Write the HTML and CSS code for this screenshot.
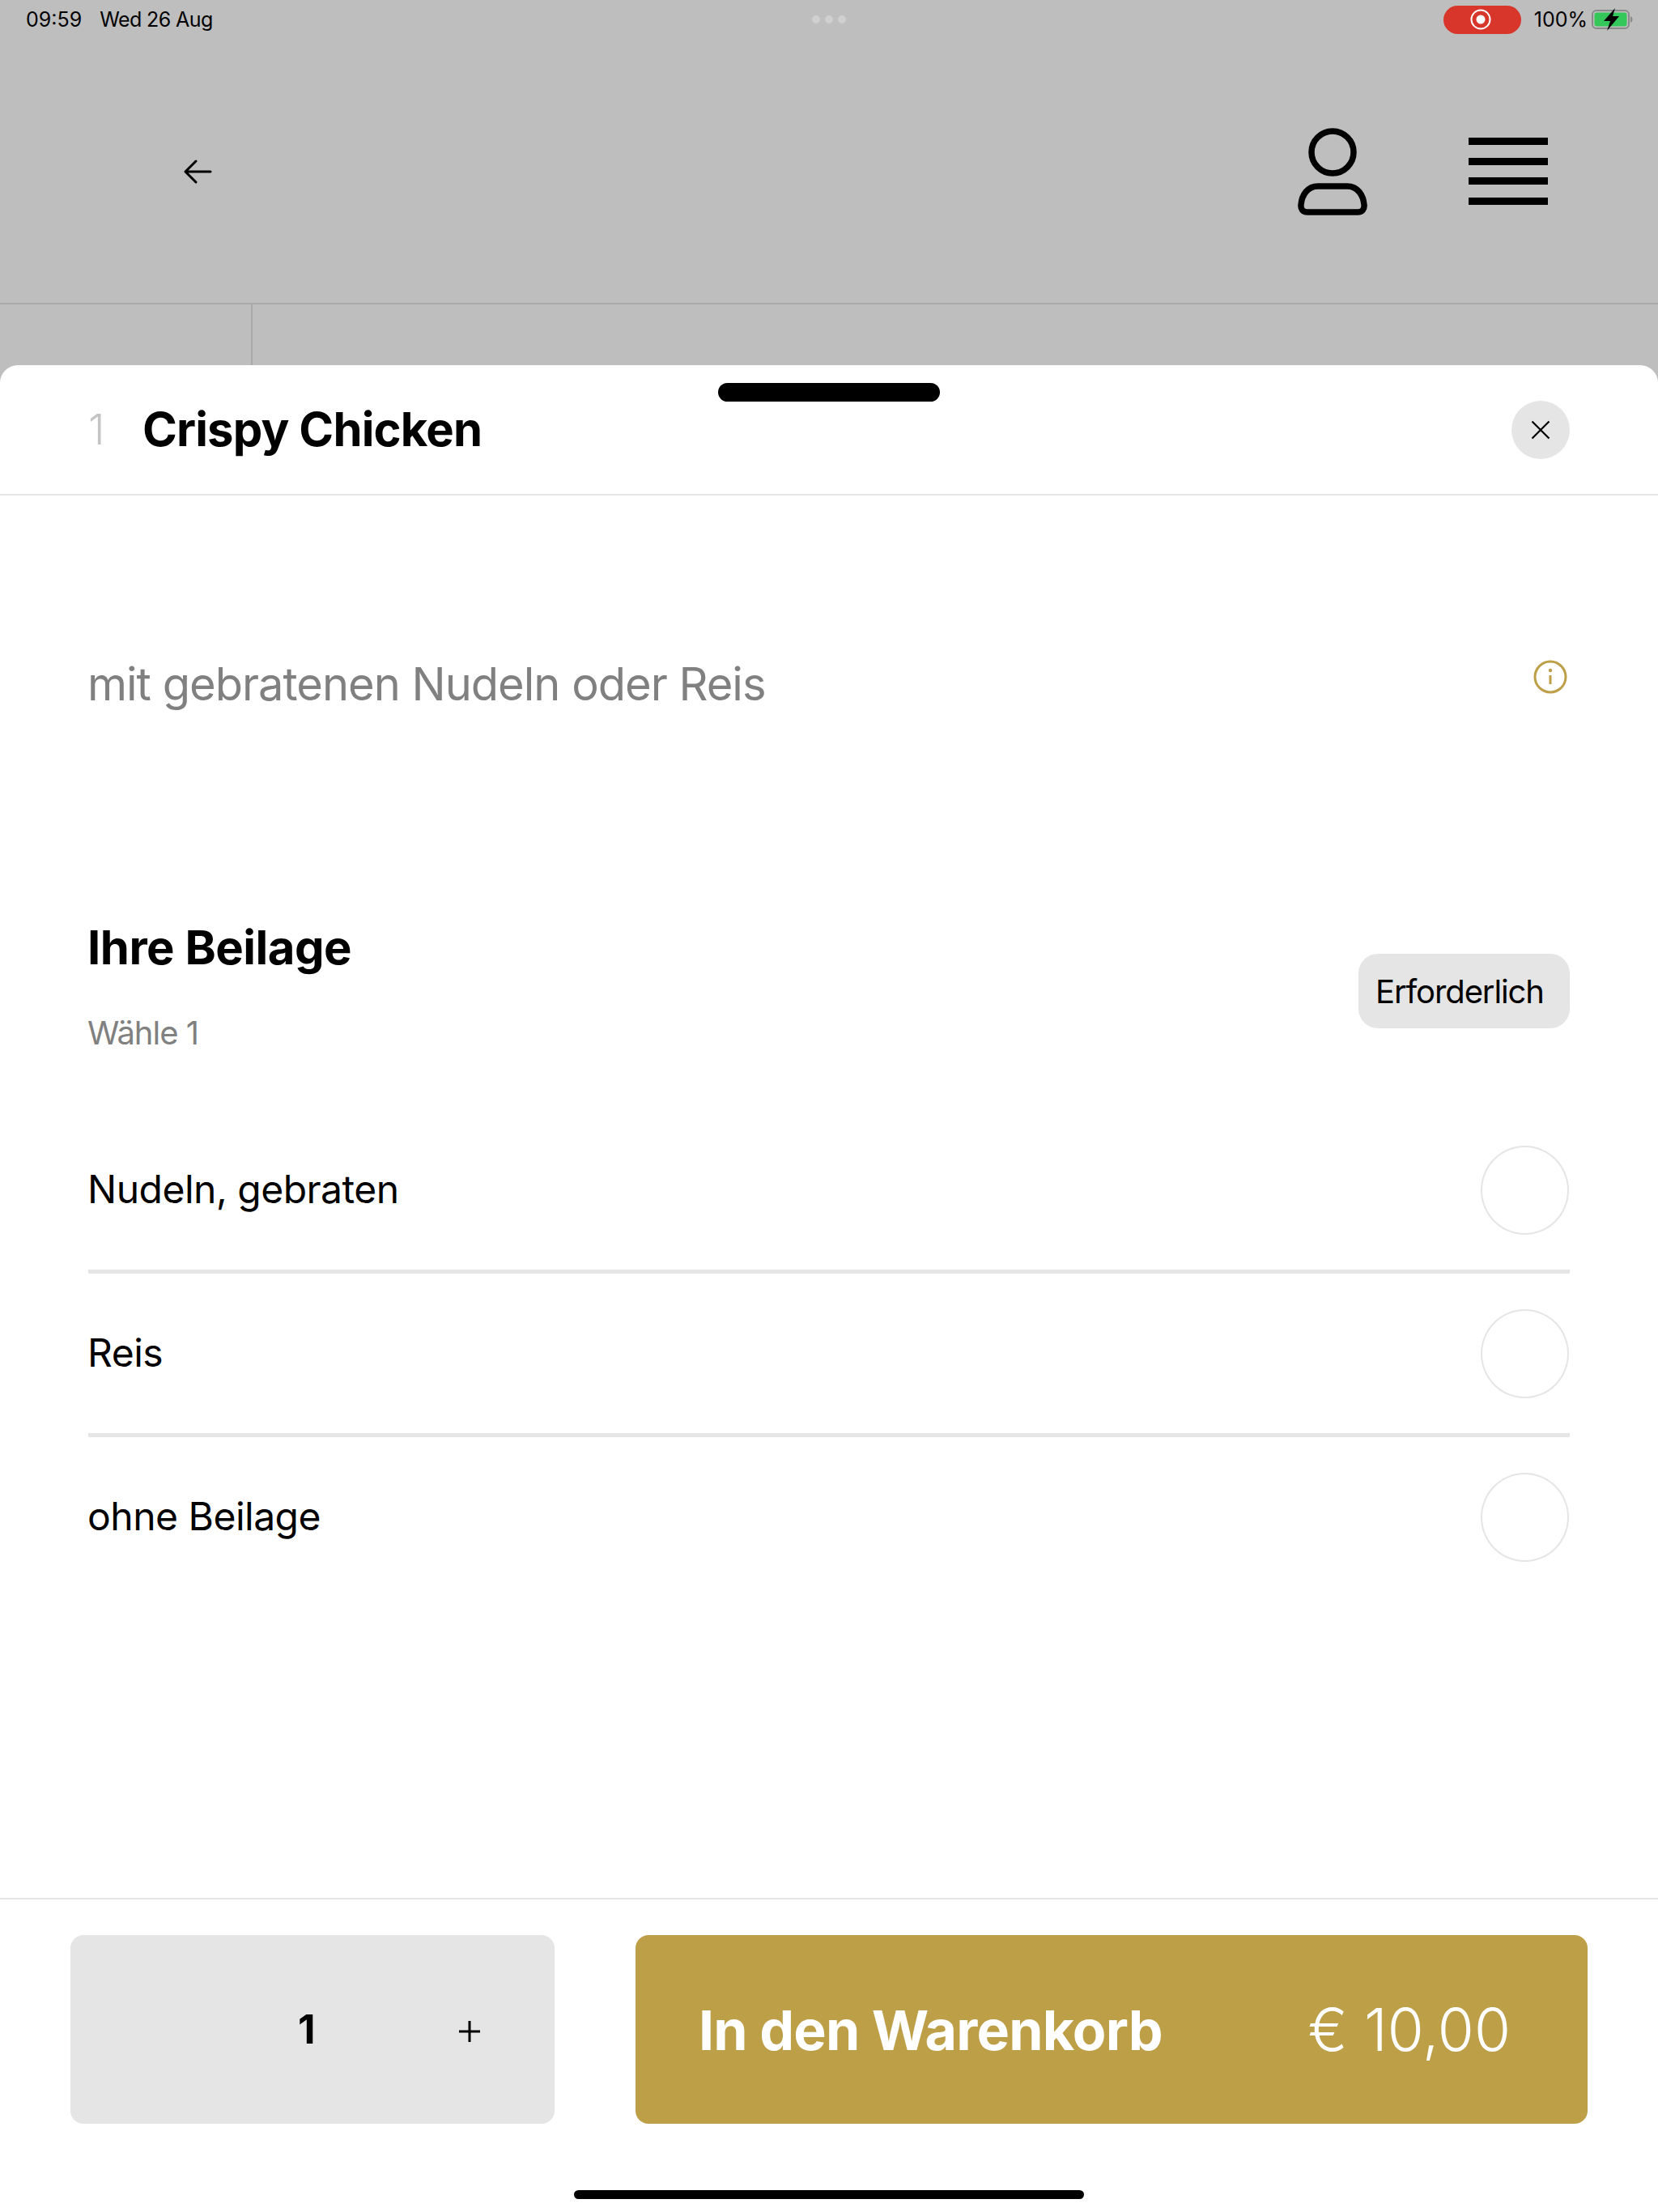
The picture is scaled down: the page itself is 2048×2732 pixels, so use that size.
FILE: index.html
```html
<!DOCTYPE html>
<html lang="de">
<head>
<meta charset="utf-8">
<title>Crispy Chicken</title>
<link rel="stylesheet" href="styles.css">
</head>
<body>
<div class="page">
  <div class="status">
    <div class="status-left"><span>09:59</span><span class="date">Wed 26 Aug</span></div>
    <div class="status-dots"><i></i><i></i><i></i></div>
    <div class="status-right">
      <div class="rec"><svg width="26" height="26" viewBox="0 0 26 26"><circle cx="13" cy="13" r="11.5" fill="none" stroke="#fff" stroke-width="2"/><circle cx="13" cy="13" r="5.5" fill="#fff"/></svg></div>
      <span class="pct">100%</span>
      <svg class="batt" width="52" height="28" viewBox="0 0 52 28"><rect x="1" y="3" width="45" height="22" rx="5" fill="none" stroke="#8a8a8a" stroke-width="2"/><rect x="3.500" y="5.500" width="40" height="17" rx="3" fill="#34c759"/><path d="M48 10c1.500.5 2.500 2.300 2.500 4s-1 3.500-2.500 4z" fill="#8a8a8a"/><path d="M29 0 15 16h8l-4 12 15-18h-8z" fill="#000"/></svg>
    </div>
  </div>
  <header class="nav">
    <svg class="back" width="36" height="30" viewBox="0 0 36 30"><path d="M34 15H3M16 2 3 15l13 13" fill="none" stroke="#000" stroke-width="3" stroke-linecap="round" stroke-linejoin="round"/></svg>
    <svg class="user" width="86" height="108" viewBox="0 0 86 108"><circle cx="43" cy="30" r="26" fill="none" stroke="#000" stroke-width="7.500"/><path d="M25 72h36c13 0 20 11 21 23 .5 5-2 9-8 9H12c-6 0-8.500-4-8-9 1-12 8-23 21-23z" fill="none" stroke="#000" stroke-width="7.500"/></svg>
    <div class="burger"><i></i><i></i><i></i><i></i></div>
  </header>
  <div class="subnav"><div class="subnav-cell"></div></div>
  <main class="sheet">
    <div class="grabber"></div>
    <div class="title-row">
      <span class="count">1</span>
      <h1 class="title">Crispy Chicken</h1>
      <button class="close"><svg width="24" height="24" viewBox="0 0 24 24"><path d="M1.500 1.500l21 21M22.500 1.500l-21 21" fill="none" stroke="#000" stroke-width="2.200"/></svg></button>
    </div>
    <div class="body">
      <div class="desc-row">
        <p class="desc">mit gebratenen Nudeln oder Reis</p>
        <svg class="info" width="42" height="42" viewBox="0 0 42 42"><circle cx="21" cy="21" r="19" fill="none" stroke="#bd9f48" stroke-width="3"/><circle cx="21" cy="13" r="2.200" fill="#bd9f48"/><path d="M21 19v11" stroke="#bd9f48" stroke-width="3"/></svg>
      </div>
      <section class="group">
        <div class="group-head">
          <div>
            <h2 class="group-title">Ihre Beilage</h2>
            <p class="group-sub">Wähle 1</p>
          </div>
          <span class="required">Erforderlich</span>
        </div>
        <ul class="options">
          <li class="option"><span>Nudeln, gebraten</span><i class="radio"></i></li>
          <li class="option"><span>Reis</span><i class="radio"></i></li>
          <li class="option"><span>ohne Beilage</span><i class="radio"></i></li>
        </ul>
      </section>
    </div>
    <footer class="footer">
      <div class="actions">
        <div class="qty"><span class="qty-num">1</span><svg class="plus" width="28" height="28" viewBox="0 0 28 28"><path d="M14 1v26M1 14h26" stroke="#000" stroke-width="3"/></svg></div>
        <button class="add"><span class="add-label">In den Warenkorb</span><span class="add-price">€ 10,00</span></button>
      </div>
      <div class="home"></div>
    </footer>
  </main>
</div>
</body>
</html>
```
FILE: styles.css
```css
* { box-sizing: border-box; }
html, body { margin: 0; padding: 0; }
body { font-family: Inter, "Liberation Sans", sans-serif; color: #000; background: #bebebe; }
.page { width: 2048px; height: 2732px; display: flex; flex-direction: column; background: #bebebe; overflow: hidden; }

.status { height: 48px; position: relative; display: flex; align-items: center; justify-content: space-between; padding: 0 30px 0 32px; font-size: 25px; }
.status-left { display: flex; gap: 22px; }
.date { letter-spacing: -0.6px; }
.status-dots { display: flex; gap: 6px; position: absolute; left: 1003px; top: 19px; }
.status-dots i { width: 10px; height: 10px; border-radius: 50%; background: #d0d0d0; }
.status-right { display: flex; align-items: center; }
.rec { width: 96px; height: 35px; border-radius: 18px; background: #d8352b; display: flex; align-items: center; justify-content: center; margin-right: 16px; }
.rec svg { margin-left: -3px; }
.pct { margin-right: 5px; }
.batt { display: block; }

.nav { height: 328px; border-bottom: 2px solid #a9a9a9; position: relative; display: flex; align-items: center; padding: 0 136px 0 226px; }
.back { margin-right: auto; margin-top: 2px; }
.user { margin-right: 125px; margin-top: 1px; }
.burger { width: 98px; display: flex; flex-direction: column; gap: 15.500px; margin-top: 1px; }
.burger i { display: block; height: 9px; background: #000; }

.subnav { height: 75px; }
.subnav-cell { width: 312px; height: 100%; border-right: 2px solid #a9a9a9; }

.sheet { flex: 1; min-height: 0; background: #fff; border-radius: 22px 22px 0 0; position: relative; display: flex; flex-direction: column; }
.grabber { position: absolute; left: 887px; top: 22px; width: 274px; height: 23px; background: #000; border-radius: 12px; }

.title-row { height: 161px; border-bottom: 2px solid #e5e5e5; display: flex; align-items: center; padding: 0 109px; flex: none; }
.count { width: 67px; font-size: 52px; font-weight: 300; color: #c4c4c4; }
.title { margin: -2px 0 0; font-size: 58px; font-weight: 700; letter-spacing: -0.85px; flex: 1; }
.close { width: 72px; height: 72px; border: 0; padding: 0; border-radius: 50%; background: #e5e5e5; display: flex; align-items: center; justify-content: center; }
.close svg { display: block; }

.body { flex: 1; min-height: 0; padding: 0 109px; }
.desc-row { display: flex; align-items: flex-start; justify-content: space-between; margin-top: 173px; height: 120px; }
.desc { margin: 0 0 0 -1px; font-size: 56px; line-height: 120px; color: #808080; letter-spacing: -1px; }
.info { margin: 30px 3px 0 0; display: block; }

.group { margin-top: 230px; }
.group-head { display: flex; align-items: center; justify-content: space-between; }
.group-title { margin: 0 0 0 -1px; font-size: 58px; font-weight: 700; line-height: 70px; letter-spacing: -0.5px; }
.group-sub { margin: 46px 0 0 -1px; font-size: 40px; line-height: 50px; color: #808080; letter-spacing: -1px; }
.required { display: block; margin-top: 12px; width: 261px; height: 92px; padding-left: 21px; border-radius: 24px; background: #e5e5e5; font-size: 40px; line-height: 94px; letter-spacing: -1.1px; }

.options { list-style: none; margin: 70px 0 0; padding: 0; }
.option { height: 202px; display: flex; align-items: center; justify-content: space-between; border-bottom: 5px solid #e5e5e5; font-size: 48px; letter-spacing: -0.5px; }
.option:last-child { border-bottom-color: transparent; }
.option span { margin: -2px 0 0 -1px; }
.radio { display: block; width: 109px; height: 110px; margin-right: 1px; border-radius: 50%; border: 2px solid #e5e5e5; }

.footer { flex: none; height: 388px; border-top: 2px solid #e5e5e5; display: flex; flex-direction: column; }
.actions { display: flex; gap: 100px; padding: 44px 87px 0; }
.qty { width: 598px; height: 233px; border-radius: 16px; background: #e5e5e5; position: relative; }
.qty-num { position: absolute; left: 281px; top: 86px; font-size: 50px; line-height: 60px; font-weight: 700; }
.plus { position: absolute; left: 479px; top: 105px; }
.add { flex: 1; height: 233px; border: 0; border-radius: 16px; background: #bd9f48; color: #fff; display: flex; align-items: center; justify-content: space-between; padding: 0 95px 0 78px; font-family: inherit; }
.add-label { font-size: 68px; font-weight: 700; letter-spacing: -0.8px; }
.add-price { font-size: 73px; font-weight: 300; }
.home { width: 630px; height: 11px; border-radius: 6px; background: #000; margin: 82px auto 0; }
```
